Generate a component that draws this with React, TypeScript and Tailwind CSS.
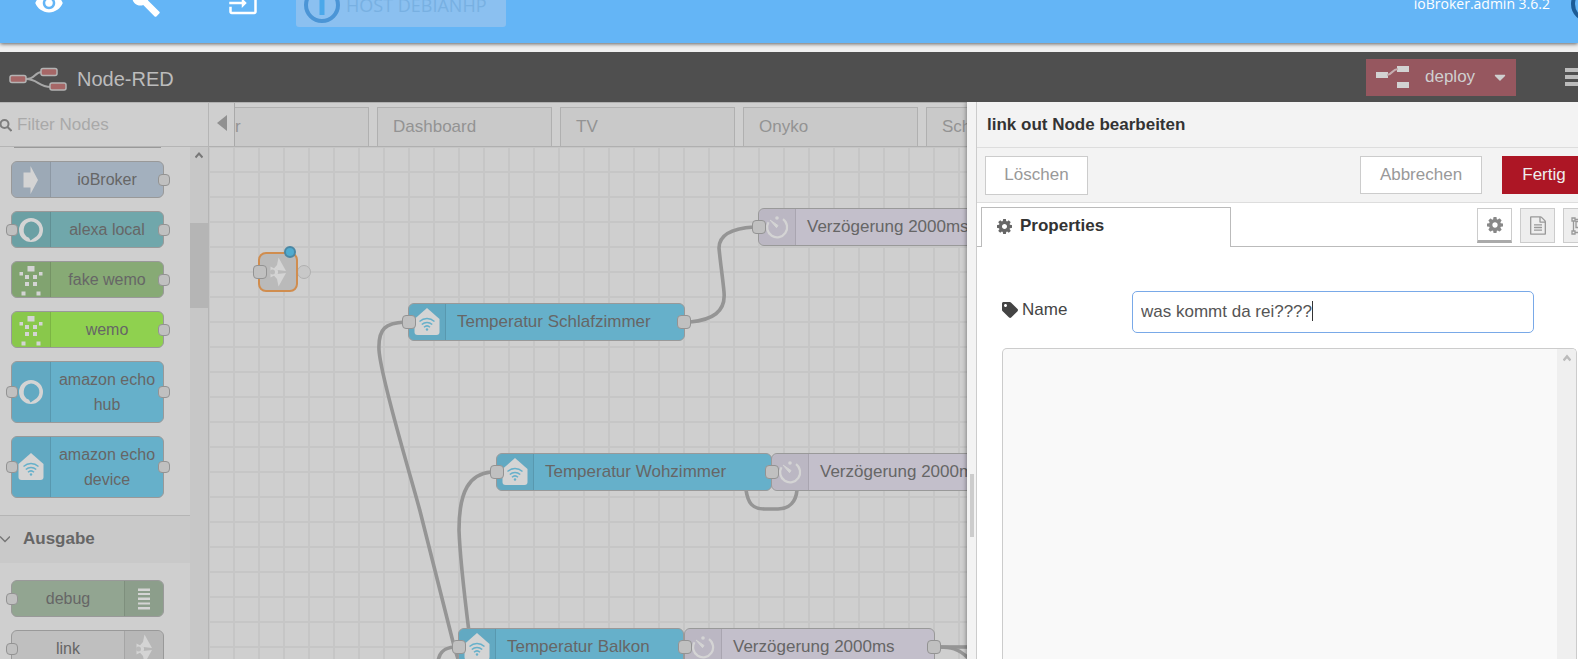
import type { ReactNode } from 'react';
import { FaCaretDown, FaTag } from 'react-icons/fa';
import { MdBuild, MdInput, MdVisibility } from 'react-icons/md';

type IconName = 'arrow' | 'ring' | 'wemo' | 'house' | 'timer' | 'debug' | 'link';

interface PaletteItem {
    label: string;
    icon: IconName;
    color: string;
    input?: boolean;
    output?: boolean;
    iconRight?: boolean;
}

interface FlowItem {
    label: string;
    icon: IconName;
    color: string;
    place: string;
    output?: boolean;
}

const inputNodes: PaletteItem[] = [
    { label: 'ioBroker', icon: 'arrow', color: 'bg-[#a3b0be]', output: true },
    { label: 'alexa local', icon: 'ring', color: 'bg-[#70a7ab]', input: true, output: true },
    { label: 'fake wemo', icon: 'wemo', color: 'bg-[#87aa75]', output: true },
    { label: 'wemo', icon: 'wemo', color: 'bg-[#8fd14f]', output: true },
    { label: 'amazon echo hub', icon: 'ring', color: 'bg-[#66b0ca]', input: true, output: true },
    { label: 'amazon echo device', icon: 'house', color: 'bg-[#66b0ca]', input: true, output: true },
];

const outputNodes: PaletteItem[] = [
    { label: 'debug', icon: 'debug', color: 'bg-[#92a591]', input: true, iconRight: true },
    { label: 'link', icon: 'link', color: 'bg-[#bfbfbf]', input: true, iconRight: true },
];

const flowNodes: FlowItem[] = [
    { label: 'Temperatur Schlafzimmer', icon: 'house', color: 'bg-[#66b0ca]', place: 'left-[199px] top-[156px] w-[277px]', output: true },
    { label: 'Verzögerung 2000ms', icon: 'timer', color: 'bg-[#c3bfcb]', place: 'left-[549px] top-[61px] w-[251px]' },
    { label: 'Temperatur Wohzimmer', icon: 'house', color: 'bg-[#66b0ca]', place: 'left-[287px] top-[306px] w-[276px]' },
    { label: 'Verzögerung 2000ms', icon: 'timer', color: 'bg-[#c3bfcb]', place: 'left-[562px] top-[306px] w-[263px]' },
    { label: 'Temperatur Balkon', icon: 'house', color: 'bg-[#66b0ca]', place: 'left-[249px] top-[481px] w-[226px]' },
    { label: 'Verzögerung 2000ms', icon: 'timer', color: 'bg-[#c3bfcb]', place: 'left-[475px] top-[481px] w-[251px]', output: true },
];

const wires = [
    'M481 175 C503 173 517 165 515 145 C514 133 511 113 510 101 C510 85 529 81 545 80',
    'M196 175 C177 176 169 181 170 203 C172 233 203 333 211 364 L244 495 C246 503 248 509 250 515',
    'M282 325 C261 327 250 343 250 383 C251 413 256 453 260 485',
    'M537 343 C539 356 543 362 556 362 L569 362 C581 362 587 354 588 343',
    'M245 500 C235 501 230 505 229 515',
    'M731 500 C740 500 750 501 760 512',
    'M731 500 H760',
];

const tabs = ['Dashboard', 'TV', 'Onyko', 'Sch'];

function NodeIcon({ name }: { name: IconName }) {
    return (
        <svg width="32" height="32" viewBox="0 0 32 32" fill="#d4d4d4" className="shrink-0" aria-hidden="true">
            {name === 'arrow' && <path d="M8.500 8.500h7V2L23 16l-7.500 14v-6.500h-7z" />}
            {name === 'ring' && (
                <path
                    fillRule="evenodd"
                    d="M16 4a12 12 0 1 0 0 24a12 12 0 1 0 0-24zM16 7.500a8.500 8.500 0 0 1 3.500 16.200L15.500 26.500l-1.500-2.700a8.500 8.500 0 0 1 2-16.300z"
                />
            )}
            {name === 'wemo' && (
                <>
                    <rect x="12.500" y="2" width="7" height="5.500" />
                    <rect x="4.500" y="8" width="3.500" height="3.500" />
                    <rect x="24" y="8" width="3.500" height="3.500" />
                    <rect x="10" y="11" width="4" height="4" />
                    <rect x="18" y="11" width="4" height="4" />
                    <rect x="10" y="18" width="4" height="4" />
                    <rect x="18" y="18" width="4" height="4" />
                    <rect x="6.500" y="27.500" width="4" height="4" />
                    <rect x="21.500" y="27.500" width="4" height="4" />
                </>
            )}
            {name === 'house' && (
                <>
                    <path d="M3.500 13L16 2l12.500 11v13a3 3 0 0 1-3 3h-19a3 3 0 0 1-3-3z" />
                    <g fill="none" stroke="#66b0ca" strokeWidth="1.500">
                        <path d="M8.500 15.500c4.500-4 10.500-4 15 0" />
                        <path d="M10.800 18.500c3-2.800 7.400-2.800 10.400 0" />
                        <path d="M13 21.300c1.800-1.700 4.200-1.700 6 0" />
                    </g>
                    <circle cx="16" cy="23.500" r="1.200" fill="#66b0ca" />
                </>
            )}
            {name === 'timer' && (
                <>
                    <path d="M22 8.200a10 10 0 1 1-14.500 3" fill="none" stroke="#d4d4d4" strokeWidth="2.200" />
                    <path d="M9 9l8 5.500-1.500 2.200z" stroke="#d4d4d4" />
                    <circle cx="16" cy="7" r="1.800" />
                </>
            )}
            {name === 'debug' && (
                <path d="M10 5.500h12v2.500H10zM10 10h12v2H10zM10 14.500h12v2.500H10zM10 19.500h12v2H10zM10 24h12v2.500H10z" />
            )}
            {name === 'link' && (
                <>
                    <path d="M16.500 1.500L24 15l-13-1.500 4-4.500z" />
                    <path d="M16.500 30.500L24 17l-13 1.500 4 4.500z" />
                    <path d="M8.500 10.500l7.500 4v3l-7.500 4z" />
                    <circle cx="10.500" cy="16" r="2.500" fill="#bababa" />
                </>
            )}
        </svg>
    );
}

function Port({ side, small }: { side: 'left' | 'right'; small?: boolean }) {
    const place = side === 'left' ? (small ? '-left-[6px]' : '-left-[7px]') : '-right-[7px]';
    return (
        <span
            className={`absolute top-1/2 -translate-y-1/2 rounded-[4px] border border-[#939393] bg-[#c0c0c0] ${
                small ? 'size-[12px]' : 'size-[14px]'
            } ${place}`}
        />
    );
}

function PaletteNode({ item }: { item: PaletteItem }) {
    return (
        <li
            className={`relative ml-[11px] flex min-h-[37px] w-[153px] rounded-md border border-[#999] ${item.color} ${
                item.iconRight ? 'flex-row-reverse' : ''
            }`}
        >
            <span
                className={`flex w-[39px] shrink-0 items-center justify-center border-black/10 bg-black/4 ${
                    item.iconRight ? 'rounded-r-md border-l' : 'rounded-l-md border-r'
                }`}
            >
                <NodeIcon name={item.icon} />
            </span>
            <span className="flex-1 self-center py-[5px] text-center text-base leading-[25px] text-[#666]">
                {item.label}
            </span>
            {item.input && <Port side="left" small />}
            {item.output && <Port side="right" small />}
        </li>
    );
}

function FlowNode({ item }: { item: FlowItem }) {
    return (
        <div className={`absolute flex h-[38px] rounded-md border border-[#999] ${item.color} ${item.place}`}>
            <span className="flex w-[37px] shrink-0 items-center justify-center rounded-l-md border-r border-black/10 bg-black/4">
                <NodeIcon name={item.icon} />
            </span>
            <span className="pl-[11px] text-[17px] leading-[35px] whitespace-nowrap text-[#666]">{item.label}</span>
            <Port side="left" />
            {item.output && <Port side="right" />}
        </div>
    );
}

function CogIcon({ className }: { className: string }) {
    return (
        <svg viewBox="0 128 1536 1536" className={className} fill="currentColor" aria-hidden="true">
            <path d="M1024 896q0-106-75-181t-181-75-181 75-75 181 75 181 181 75 181-75 75-181zm512-109v222q0 12-8 23t-20 13l-185 28q-19 54-39 91 35 50 107 138 10 12 10 25t-9 23q-27 37-99 108t-94 71q-12 0-26-9l-138-108q-44 23-91 38-16 136-29 186-7 28-36 28h-222q-14 0-24.500-8.500t-11.500-21.500l-28-184q-49-16-90-37l-141 107q-10 9-25 9-14 0-25-11-126-114-165-168-7-10-7-23 0-12 8-23 15-21 51-66.500t54-70.500q-27-50-41-99l-183-27q-13-2-21-12.500t-8-23.500v-222q0-12 8-23t19-13l186-28q14-46 39-92-40-57-107-138-10-12-10-24 0-10 9-23 26-36 98.500-107.500t94.500-71.500q13 0 26 10l138 107q44-23 91-38 16-136 29-186 7-28 36-28h222q14 0 24.500 8.500t11.500 21.500l28 184q49 16 90 37l142-107q9-9 24-9 13 0 25 10 129 119 165 170 7 8 7 22 0 12-8 23-15 21-51 66.500t-54 70.500q26 50 41 98l183 28q13 2 21 12.500t8 23.500z" />
        </svg>
    );
}

function HostLogo({ dark }: { dark?: boolean }) {
    return (
        <svg width="38" height="38" viewBox="0 0 38 38" className="shrink-0" aria-hidden="true">
            <circle cx="19" cy="19" r="16" fill="none" stroke={dark ? '#1c5c97' : '#4b95d6'} strokeWidth="4" />
            <rect x="16.500" y="6" width="5" height="23" fill="#4aa8ea" />
        </svg>
    );
}

function TopBar() {
    return (
        <header className="flex h-[43px] items-end justify-between overflow-hidden bg-[#64b5f6] font-['Open_Sans',sans-serif]">
            <div className="flex items-end">
                <nav className="flex gap-[67px] pb-[25px] pl-[34px] text-white">
                    <button type="button" aria-label="Sichtbarkeit"><MdVisibility size={30} /></button>
                    <button type="button" aria-label="Einstellungen"><MdBuild size={30} /></button>
                    <button type="button" aria-label="Anmelden"><MdInput size={30} /></button>
                </nav>
                <button
                    type="button"
                    className="mb-4 ml-[38px] flex h-[44px] w-[210px] items-center gap-[5px] rounded-[3px] bg-[#8bc0f0] pl-[7px] text-lg text-[#78b0e2]"
                >
                    <HostLogo />
                    HOST DEBIANHP
                </button>
            </div>
            <div className="-mr-[30px] flex items-center gap-[20px] pb-[20px] text-sm text-white">
                ioBroker.admin 3.6.2
                <HostLogo dark />
            </div>
        </header>
    );
}

function EditorHeader() {
    return (
        <div className="flex h-[50px] shrink-0 items-center justify-between overflow-hidden bg-[#4f4f4f] text-[#bcbcbc]">
            <div className="flex items-center gap-[10px] pt-[3px] pl-[9px] text-xl">
                <svg width="58" height="26" viewBox="0 0 58 26" aria-hidden="true">
                    <g fill="none" stroke="#a8a8a8" strokeWidth="2">
                        <path d="M17 13c10 0 8-7 16-7M17 13c12 0 12 8 25 8" />
                    </g>
                    <g fill="#a66767" stroke="#b4b4b4" strokeWidth="1.500">
                        <rect x="1" y="9.500" width="16" height="7" rx="2" />
                        <rect x="32" y="2.500" width="16" height="7" rx="2" />
                        <rect x="41" y="17" width="16" height="7" rx="2" />
                    </g>
                </svg>
                <span>Node-RED</span>
            </div>
            <div className="flex items-center gap-[49px]">
                <button type="button" className="flex h-[37px] w-[150px] items-center bg-[#96575f] pl-[10px] text-[17px] text-[#cfcfcf]">
                    <svg width="33" height="24" viewBox="0 0 33 24" fill="#d2d2d2" aria-hidden="true">
                        <path d="M0 7h12v6H0zM21 1h12v6H21zM21 17h12v6H21z" />
                        <path d="M11 10c5 0 5-6 11-6" fill="none" stroke="#c4acaf" strokeWidth="2" />
                    </svg>
                    <span className="ml-4">deploy</span>
                    <FaCaretDown size={18} className="ml-4" />
                </button>
                <button type="button" aria-label="Menü" className="w-[13px] overflow-hidden">
                    <svg width="21" height="18" viewBox="0 0 21 18" fill="#bcbcbc" aria-hidden="true">
                        <path d="M0 0h21v4H0zM0 7h21v4H0zM0 14h21v4H0z" />
                    </svg>
                </button>
            </div>
        </div>
    );
}

function Palette() {
    return (
        <aside className="flex w-[209px] shrink-0 flex-col border-r border-[#b5b5b5]">
            <div className="flex h-[45px] shrink-0 items-center gap-[5px] border-y border-[#b5b5b5]">
                <svg width="12" height="14" viewBox="0 0 12 14" fill="none" stroke="#7d7d7d" strokeWidth="2" className="shrink-0" aria-hidden="true">
                    <circle cx="4.500" cy="6" r="4" />
                    <path d="M7.500 9l4 4" />
                </svg>
                <input
                    type="text"
                    aria-label="Filter Nodes"
                    placeholder="Filter Nodes"
                    className="min-w-0 flex-1 text-[17px] leading-6 outline-none placeholder:text-[#a9a9a9]"
                />
            </div>
            <div className="flex min-h-0 flex-1">
                <div className="min-w-0 flex-1 overflow-hidden">
                    <div className="ml-[14px] h-px w-[147px] bg-[#999]" />
                    <ul className="flex flex-col gap-[13px] pt-[13px] pb-[17px]">
                        {inputNodes.map((item) => (
                            <PaletteNode key={item.label} item={item} />
                        ))}
                    </ul>
                    <h2 className="flex h-[48px] items-center gap-[13px] border-t border-[#b5b5b5] bg-[#c9c9c9] pb-[2px] text-[17px] font-bold text-[#666]">
                        <svg width="10" height="8" viewBox="0 0 10 8" fill="none" stroke="#777" strokeWidth="1.500" aria-hidden="true">
                            <path d="M0 1.500l5 5 5-5" />
                        </svg>
                        Ausgabe
                    </h2>
                    <ul className="flex flex-col gap-[13px] pt-[17px]">
                        {outputNodes.map((item) => (
                            <PaletteNode key={item.label} item={item} />
                        ))}
                    </ul>
                </div>
                <div className="flex w-[18px] shrink-0 flex-col items-center bg-[#c7c7c7]">
                    <svg width="8" height="8" viewBox="0 0 8 8" fill="none" stroke="#777" strokeWidth="2" className="mt-[4px] shrink-0" aria-hidden="true">
                        <path d="M0.500 6.500L4 2.500l3.500 4" />
                    </svg>
                    <div className="mt-[64px] h-[85px] w-full shrink-0 bg-[#b5b5b5]" />
                </div>
            </div>
        </aside>
    );
}

function Workspace() {
    return (
        <main className="flex min-w-0 flex-1 flex-col overflow-hidden">
            <div className="flex h-[45px] shrink-0 border-y border-[#b0b0b0]">
                <button
                    type="button"
                    aria-label="Nach links"
                    className="flex w-[26px] shrink-0 items-center justify-center border-r border-[#a9a9a9]"
                >
                    <svg width="10" height="16" viewBox="0 0 10 16" fill="#909090" className="mb-1" aria-hidden="true">
                        <path d="M10 0v16L0 8z" />
                    </svg>
                </button>
                <div className="flex gap-2 overflow-hidden pt-1 text-[17px] text-[#939393]">
                    <a href="#r" className="flex w-[134px] shrink-0 items-center border-t border-r border-[#b0b0b0] bg-[#c9c9c9]">
                        r
                    </a>
                    {tabs.map((tab) => (
                        <a
                            key={tab}
                            href={`#${tab}`}
                            className="flex w-[175px] shrink-0 items-center border border-b-0 border-[#b0b0b0] bg-[#c9c9c9] pl-[15px]"
                        >
                            {tab}
                        </a>
                    ))}
                </div>
            </div>
            <div className="relative min-h-0 flex-1 overflow-hidden">
                <svg width="100%" height="100%" className="absolute inset-0" aria-hidden="true">
                    <defs>
                        <pattern id="grid" width="25" height="25" patternUnits="userSpaceOnUse">
                            <path d="M0 0H25M0 0V25M25 0V25M0 25H25" stroke="#c6c6c6" strokeWidth="2" />
                        </pattern>
                    </defs>
                    <rect width="100%" height="100%" fill="url(#grid)" />
                    <g fill="none" stroke="#959595" strokeWidth="3.600">
                        {wires.map((d) => (
                            <path key={d} d={d} />
                        ))}
                    </g>
                    <circle cx="95" cy="125" r="6.500" fill="#c8c8c8" stroke="#b0b0b0" />
                </svg>
                {flowNodes.map((item) => (
                    <FlowNode key={item.place} item={item} />
                ))}
                {/* selected link node with its change marker */}
                <div className="absolute top-[105px] left-[49px] flex size-[40px] items-center justify-center rounded-lg border-2 border-[#d08d4f] bg-[#bababa]">
                    <NodeIcon name="link" />
                    <Port side="left" />
                    <span className="absolute -top-[8px] right-0 size-3 rounded-full border-2 border-[#4b87a3] bg-[#4fabd0]" />
                </div>
            </div>
        </main>
    );
}

function ModeButton({ label, active, children }: { label: string; active?: boolean; children: ReactNode }) {
    return (
        <button
            type="button"
            aria-label={label}
            className={`flex size-[35px] shrink-0 items-center justify-center border border-[#ccc] ${
                active ? 'border-b-[3px] border-b-[#aaa] bg-white text-[#888]' : 'bg-[#eee] text-[#999]'
            }`}
        >
            {children}
        </button>
    );
}

function EditTray() {
    return (
        <section className="z-10 flex w-[611px] shrink-0 bg-[#f3f3f3] shadow-[-1px_0_4px_rgba(0,0,0,0.35)]">
            <div className="flex w-[10px] shrink-0 justify-center border-r border-[#ccc]">
                <div className="mt-[372px] h-[63px] w-1 bg-[#ccc]" />
            </div>
            <div className="flex min-w-0 flex-1 flex-col overflow-hidden bg-white">
                <h1 className="flex h-[46px] shrink-0 items-center border-b border-[#ddd] bg-[#f3f3f3] pl-[10px] text-[17px] font-bold text-[#333]">
                    link out Node bearbeiten
                </h1>
                <div className="flex h-[55px] shrink-0 items-center border-b border-[#ddd] bg-[#f3f3f3] px-2 text-[17px] text-[#999]">
                    <button type="button" className="h-[39px] w-[103px] border border-[#ccc] bg-white">Löschen</button>
                    <button type="button" className="ml-auto h-[38px] w-[122px] border border-[#ccc] bg-white">Abbrechen</button>
                    <button type="button" className="-mr-4 ml-[20px] h-[38px] w-[84px] bg-[#ad1625] text-[#eee]">Fertig</button>
                </div>
                <div className="flex h-[44px] shrink-0">
                    <div className="w-1 border-b border-[#bbb]" />
                    <a href="#properties" className="mt-1 flex w-[250px] items-center gap-2 border border-b-0 border-[#bbb] pb-[3px] pl-[15px] text-[17px] font-bold text-[#333]">
                        <CogIcon className="size-[15px] text-[#666]" />
                        Properties
                    </a>
                    <div className="flex flex-1 items-start justify-end gap-2 border-b border-[#bbb] pt-[5px]">
                        <ModeButton label="Eigenschaften" active>
                            <CogIcon className="size-4" />
                        </ModeButton>
                        <ModeButton label="Beschreibung">
                            <svg viewBox="0 0 1536 1792" className="h-[19px] w-4" fill="currentColor" aria-hidden="true">
                                <path d="M1468 380q28 28 48 76t20 88v1152q0 40-28 68t-68 28h-1344q-40 0-68-28t-28-68v-1600q0-40 28-68t68-28h896q40 0 88 20t76 48zm-444-244v376h376q-10-29-22-41l-313-313q-12-12-41-22zm384 1528v-1024h-416q-40 0-68-28t-28-68v-416h-768v1536h1280zm-1024-864q0-14 9-23t23-9h704q14 0 23 9t9 23v64q0 14-9 23t-23 9h-704q-14 0-23-9t-9-23v-64zm736 224q14 0 23 9t9 23v64q0 14-9 23t-23 9h-704q-14 0-23-9t-9-23v-64q0-14 9-23t23-9h704zm0 256q14 0 23 9t9 23v64q0 14-9 23t-23 9h-704q-14 0-23-9t-9-23v-64q0-14 9-23t23-9h704z" />
                            </svg>
                        </ModeButton>
                        <div className="-mr-5">
                            <ModeButton label="Darstellung">
                                <svg width="20" height="18" viewBox="0 0 20 18" fill="none" stroke="currentColor" strokeWidth="1.300" aria-hidden="true">
                                    <path d="M2.500 4v10M17.500 4v10M4 2.500h12M4 15.500h12" />
                                    <path d="M1 1h3v3H1zM16 1h3v3h-3zM1 14h3v3H1zM16 14h3v3h-3zM5 4.500h7v6H5zM12 7.500h3v6H8v-3" />
                                </svg>
                            </ModeButton>
                        </div>
                    </div>
                </div>
                <form className="flex min-h-0 flex-1 flex-col pt-[44px] pr-px pl-[25px]" onSubmit={(e) => e.preventDefault()}>
                    <div className="flex items-center pr-[43px]">
                        <label htmlFor="node-name" className="flex w-[130px] shrink-0 items-center gap-1 pb-1 text-[17px] text-[#444]">
                            <FaTag size={16} />
                            Name
                        </label>
                        <div className="relative min-w-0 flex-1">
                            <input
                                id="node-name"
                                type="text"
                                defaultValue="was kommt da rei????"
                                className="block h-[42px] w-full rounded-[5px] border border-[#79a9e8] px-2 text-[17px] text-[#555] outline-none"
                            />
                            <span className="absolute top-[10px] left-[180px] h-5 w-px bg-[#333]" />
                        </div>
                    </div>
                    <div className="mt-[15px] flex min-h-0 flex-1 overflow-hidden rounded-t-[5px] border border-b-0 border-[#ccc] bg-[#f9f9f9]">
                        <div className="flex-1" />
                        <div className="flex w-[19px] justify-center bg-[#efefef]">
                            <svg width="8" height="8" viewBox="0 0 8 8" fill="none" stroke="#bbb" strokeWidth="2.500" className="mt-[5px]" aria-hidden="true">
                                <path d="M0.500 6.500L4 2.500l3.500 4" />
                            </svg>
                        </div>
                    </div>
                </form>
            </div>
        </section>
    );
}

export default function App() {
    return (
        <div className="flex h-screen flex-col overflow-hidden bg-[#f0f0f0] font-['Liberation_Sans',Arial,sans-serif]">
            <div className="mb-[9px] shrink-0 shadow-[0_1px_4px_rgba(0,0,0,0.6)]">
                <TopBar />
            </div>
            <EditorHeader />
            <div className="flex min-h-0 flex-1 overflow-hidden bg-[#cfcfcf]">
                <Palette />
                <Workspace />
                <EditTray />
            </div>
        </div>
    );
}
